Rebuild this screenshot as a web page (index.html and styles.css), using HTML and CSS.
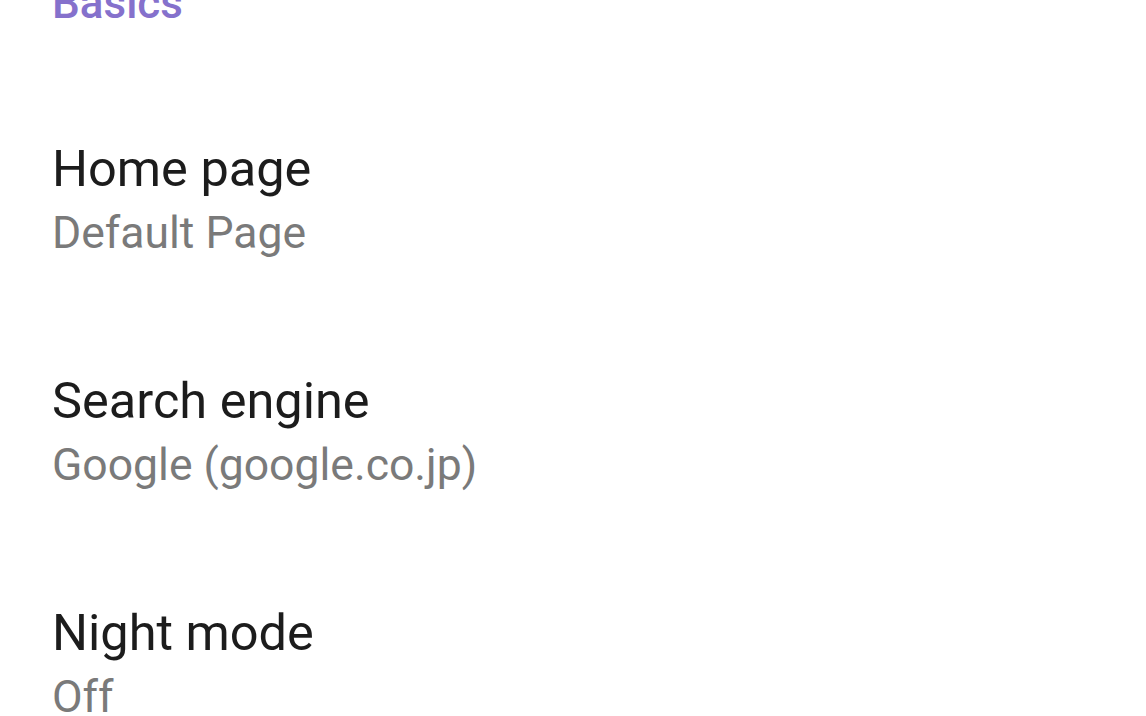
FILE: index.html
```html
<!DOCTYPE html>
<html>
<head>
<meta charset="utf-8">
<link rel="stylesheet" href="styles.css">
</head>
<body>
<div class="settings">
  <div class="section-header">Basics</div>
  <div class="item">
    <div class="title">Home page</div>
    <div class="summary">Default Page</div>
  </div>
  <div class="item">
    <div class="title">Search engine</div>
    <div class="summary">Google (google.co.jp)</div>
  </div>
  <div class="item">
    <div class="title">Night mode</div>
    <div class="summary">Off</div>
  </div>
</div>
</body>
</html>
```

FILE: styles.css
```css
html, body {
  margin: 0;
  padding: 0;
  background: #ffffff;
  overflow: hidden;
}
body {
  font-family: Roboto, "Liberation Sans", sans-serif;
  width: 1146px;
  height: 716px;
}
.settings {
  padding-left: 52px;
  margin-top: -27px;
}
.section-header {
  font-size: 44px;
  line-height: 60px;
  font-weight: 500;
  color: #8571cc;
  margin-bottom: 55px;
}
.item {
  padding: 51px 0 52px;
}
.title {
  font-size: 50.5px;
  line-height: 60px;
  color: #1c1c1c;
}
.summary {
  font-size: 44.5px;
  line-height: 69px;
  color: #7a7a7a;
}
```
